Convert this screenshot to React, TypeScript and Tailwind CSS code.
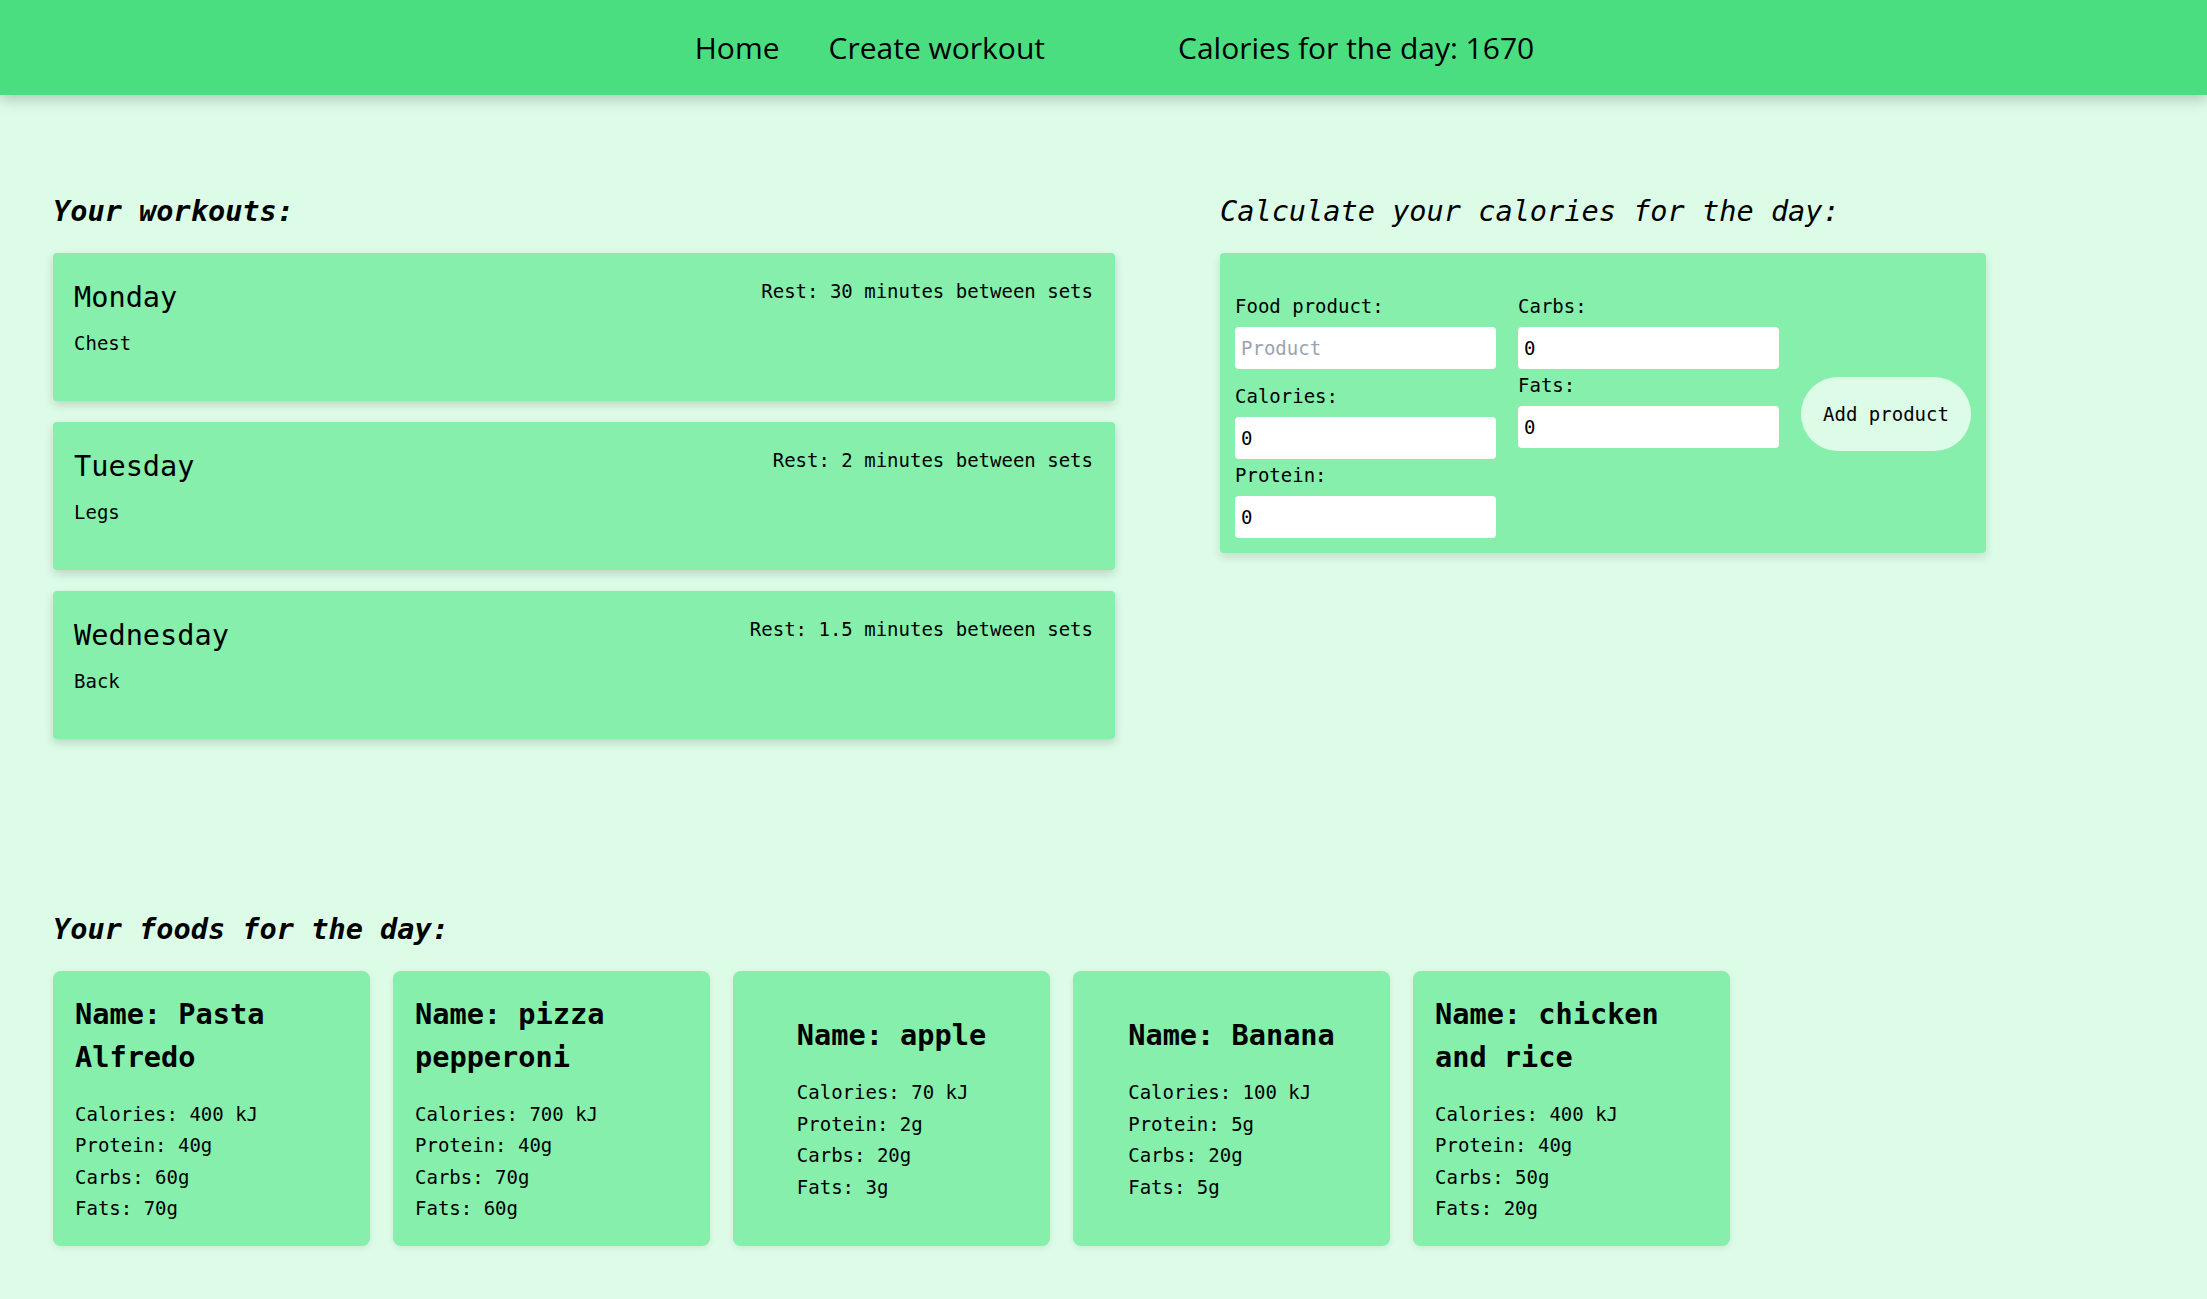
const workouts = [
  { day: "Monday", muscle: "Chest", rest: "Rest: 30 minutes between sets" },
  { day: "Tuesday", muscle: "Legs", rest: "Rest: 2 minutes between sets" },
  { day: "Wednesday", muscle: "Back", rest: "Rest: 1.5 minutes between sets" },
];

const foods = [
  { name: "Pasta Alfredo", calories: 400, protein: 40, carbs: 60, fats: 70 },
  { name: "pizza pepperoni", calories: 700, protein: 40, carbs: 70, fats: 60 },
  { name: "apple", calories: 70, protein: 2, carbs: 20, fats: 3 },
  { name: "Banana", calories: 100, protein: 5, carbs: 20, fats: 5 },
  { name: "chicken and rice", calories: 400, protein: 40, carbs: 50, fats: 20 },
];

function Field({ label, placeholder, className }: { label: string; placeholder?: string; className?: string }) {
  return (
    <label className={"flex flex-col " + (className ?? "")}>
      <span className="leading-[22px]">{label}</span>
      <input
        className="mt-[10px] h-[42px] w-full rounded-[4px] bg-white px-[6px] text-[19px] text-black outline-none placeholder:text-[#9ca3af]"
        placeholder={placeholder}
        defaultValue={placeholder ? undefined : "0"}
      />
    </label>
  );
}

export default function App() {
  return (
    <div className="min-h-screen bg-[#dcfce7] pb-[40px] font-['DejaVu_Sans_Mono',monospace] text-black">
      <header className="relative z-10 flex h-[95px] items-center justify-center bg-[#4ade80] pl-[22px] font-['Open_Sans',sans-serif] text-[30px] shadow-[0_4px_14px_rgba(0,0,0,0.22)]">
        <a>Home</a>
        <a className="ml-[49px]">Create workout</a>
        <span className="ml-[133px]">Calories for the day: 1670</span>
      </header>

      <main className="px-[53px] pt-[99px]">
        <div className="flex items-start">
          <section className="w-[1062px]">
            <h2 className="mb-[25px] text-[28.6px] leading-[34px] font-bold italic">Your workouts:</h2>
            <div className="flex flex-col gap-[21px]">
              {workouts.map((w) => (
                <div key={w.day} className="h-[148px] rounded-[4px] bg-[#86efac] pt-[27px] pr-[22px] pl-[21px] shadow-[0_4px_10px_rgba(0,0,0,0.15)]">
                  <div className="flex items-start justify-between">
                    <h3 className="text-[28.6px] leading-[34px]">{w.day}</h3>
                    <span className="text-[19px] leading-[22px]">{w.rest}</span>
                  </div>
                  <p className="mt-[18px] text-[19px] leading-[22px]">{w.muscle}</p>
                </div>
              ))}
            </div>
          </section>

          <section className="ml-[105px]">
            <h2 className="mb-[25px] text-[28.6px] leading-[34px] italic">Calculate your calories for the day:</h2>
            <div className="flex h-[300px] w-[766px] items-start rounded-[4px] bg-[#86efac] px-[15px] pt-[42px] pb-[15px] text-[19px] shadow-[0_4px_10px_rgba(0,0,0,0.12)]">
              <div className="flex w-[261px] flex-col">
                <Field label="Food product:" placeholder="Product" />
                <Field label="Calories:" className="mt-[16px]" />
                <Field label="Protein:" className="mt-[5px]" />
              </div>
              <div className="ml-[22px] flex w-[261px] flex-col">
                <Field label="Carbs:" />
                <Field label="Fats:" className="mt-[5px]" />
              </div>
              <button className="mt-[82px] ml-[22px] h-[74px] w-[170px] rounded-full bg-[#dcfce7] text-[19px]">Add product</button>
            </div>
          </section>
        </div>

        <section className="mt-[173px]">
          <h2 className="mb-[25px] text-[28.6px] leading-[34px] font-bold italic">Your foods for the day:</h2>
          <div className="flex gap-[23px]">
            {foods.map((f) => (
              <div key={f.name} className="flex h-[275px] w-[317px] items-center justify-center rounded-[8px] bg-[#86efac] px-[22px] shadow-[0_2px_6px_rgba(0,0,0,0.08)]">
                <div>
                  <h3 className="mb-[20px] text-[28.6px] leading-[43px] font-bold">Name: {f.name}</h3>
                  <p className="text-[19px] leading-[31.5px]">Calories: {f.calories} kJ</p>
                  <p className="text-[19px] leading-[31.5px]">Protein: {f.protein}g</p>
                  <p className="text-[19px] leading-[31.5px]">Carbs: {f.carbs}g</p>
                  <p className="text-[19px] leading-[31.5px]">Fats: {f.fats}g</p>
                </div>
              </div>
            ))}
          </div>
        </section>
      </main>
    </div>
  );
}
